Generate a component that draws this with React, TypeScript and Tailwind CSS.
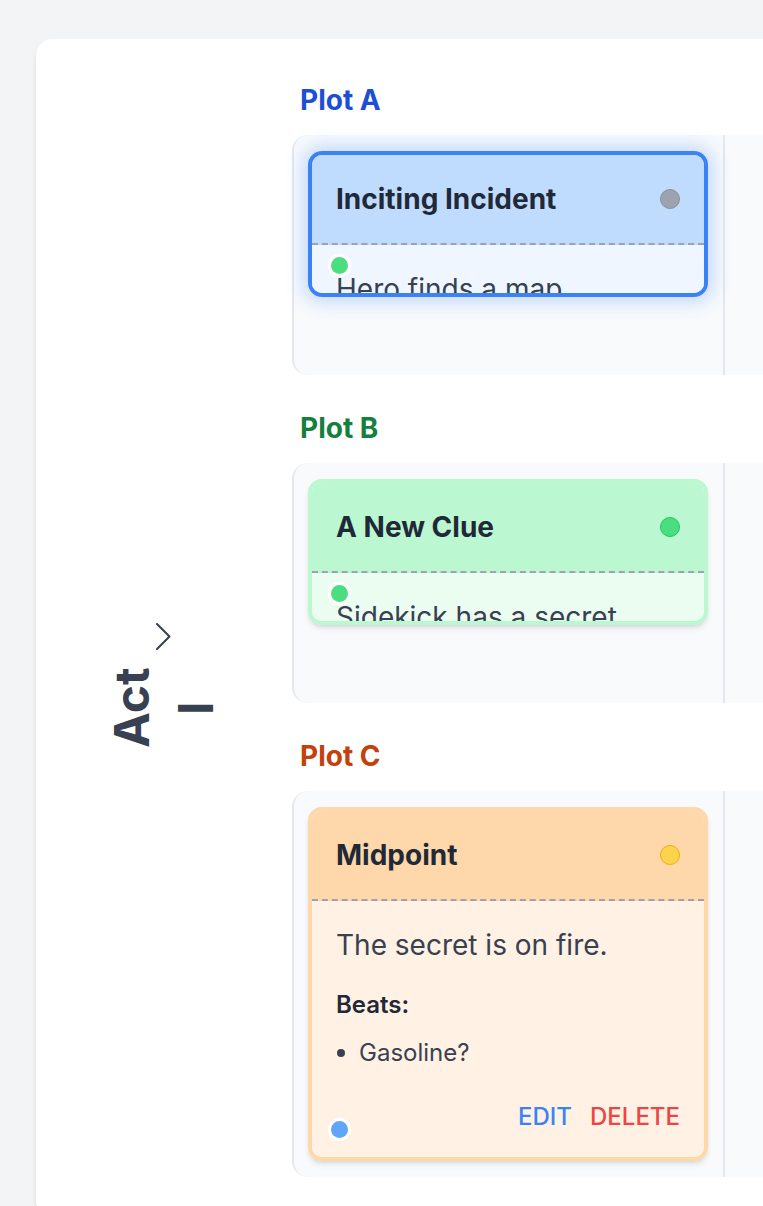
import React from "react";

type CardProps = {
  title: string;
  body: string;
  beats?: string[];
  collapsed?: boolean;
  border: string;
  headerBg: string;
  bodyBg: string;
  dot: string;
  handle: string;
  shadow: string;
};

function Card(p: CardProps) {
  return (
    <div className={`w-[400px] rounded-[14px] border-4 overflow-hidden ${p.border} ${p.shadow}`}>
      <div className={`flex items-center justify-between px-6 py-6 border-b-2 border-dashed border-[#9ca3af] ${p.headerBg}`}>
        <span className="text-[28px] leading-[40px] font-bold text-[#1f2937]">{p.title}</span>
        <span className={`w-5 h-5 rounded-full border ${p.dot}`} />
      </div>
      <div className={`relative px-6 pt-6 ${p.bodyBg} ${p.collapsed ? "h-[48px] overflow-hidden" : "pb-6"}`}>
        <p className="text-[28px] leading-[40px] text-[#374151]">{p.body}</p>
        {!p.collapsed && (
          <>
            <p className="mt-6 text-[24px] leading-[32px] font-semibold text-[#1f2937]">Beats:</p>
            <ul className="mt-4">
              {p.beats?.map((b) => (
                <li key={b} className="flex items-center gap-[14px] text-[24px] leading-[32px] text-[#374151]">
                  <span className="ml-[1px] w-2 h-2 rounded-full bg-[#374151]" />
                  {b}
                </li>
              ))}
            </ul>
            <div className="mt-8 flex justify-end gap-[18px] text-[24px] leading-[32px] font-medium">
              <button className="text-[#3b82f6]">EDIT</button>
              <button className="text-[#ef4444]">DELETE</button>
            </div>
          </>
        )}
        <span className={`absolute left-4 bottom-4 w-[23px] h-[23px] rounded-full border-[3.5px] border-white ${p.handle}`} />
      </div>
    </div>
  );
}

function Row({ label, labelColor, children }: { label: string; labelColor: string; children: React.ReactNode }) {
  return (
    <div>
      <h2 className={`px-2 pt-[3px] mb-[17px] text-[28px] leading-[36px] font-bold ${labelColor}`}>{label}</h2>
      <div className="flex min-h-[240px] bg-[#f8fafc] border-l-2 border-[#e2e8f0] rounded-l-2xl">
        <div className="w-[431px] shrink-0 pl-[14px] py-4 border-r-2 border-[#e2e8f0]">{children}</div>
        <div className="w-[430px] shrink-0" />
      </div>
    </div>
  );
}

export default function App() {
  return (
    <div className="w-screen h-screen overflow-hidden bg-[#f3f4f6] font-['Inter',sans-serif]">
      <div className="ml-[36px] mt-[39px] w-[1200px] rounded-2xl bg-white shadow-md pt-10 pb-10 flex">
        <div className="w-[256px] shrink-0 flex justify-center">
          <div className="mt-[544px] h-[125px] w-[128px] [writing-mode:vertical-rl] rotate-180 flex items-center gap-[18px] text-[#374151]">
            <span className="h-[80px] text-center text-[48px] leading-[64px] font-bold">Act I</span>
            <svg width="15" height="27" viewBox="0 0 15 27" fill="none" stroke="currentColor" strokeWidth="2" strokeLinecap="round" strokeLinejoin="round">
              <path d="M14 1 L1.5 13.5 L14 26" />
            </svg>
          </div>
        </div>
        <div className="flex-1 flex flex-col gap-8">
          <Row label="Plot A" labelColor="text-[#1d4ed8]">
            <Card
              title="Inciting Incident"
              body="Hero finds a map"
              collapsed
              border="border-[#3b82f6]"
              headerBg="bg-[#bfdbfe]"
              bodyBg="bg-[#eff6ff]"
              dot="bg-[#9ca3af] border-[#8b9099]"
              handle="bg-[#4ade80]"
              shadow="shadow-[0_0_18px_5px_rgba(59,130,246,0.28)]"
            />
          </Row>
          <Row label="Plot B" labelColor="text-[#15803d]">
            <Card
              title="A New Clue"
              body="Sidekick has a secret"
              collapsed
              border="border-[#bbf7d0]"
              headerBg="bg-[#bbf7d0]"
              bodyBg="bg-[#ebfcf1]"
              dot="bg-[#4ade80] border-[#22c55e]"
              handle="bg-[#4ade80]"
              shadow="shadow-md"
            />
          </Row>
          <Row label="Plot C" labelColor="text-[#c2410c]">
            <Card
              title="Midpoint"
              body="The secret is on fire."
              beats={["Gasoline?"]}
              border="border-[#fed7aa]"
              headerBg="bg-[#fed7aa]"
              bodyBg="bg-[#fff1e3]"
              dot="bg-[#fcd34d] border-[#eab308]"
              handle="bg-[#60a5fa]"
              shadow="shadow-md"
            />
          </Row>
        </div>
      </div>
    </div>
  );
}
